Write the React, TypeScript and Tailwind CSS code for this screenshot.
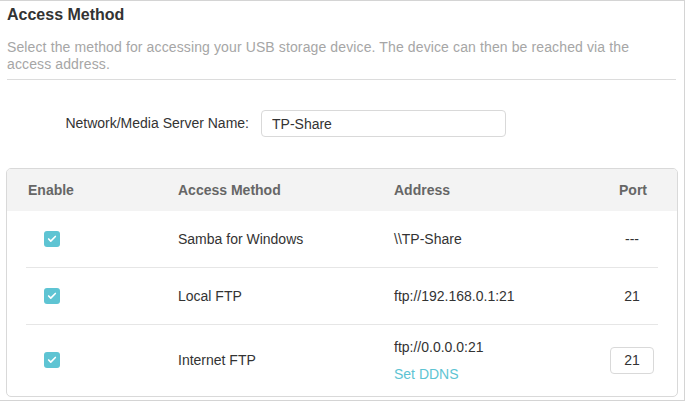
import { Check } from 'lucide-react'

const rows = [
  { method: 'Samba for Windows', address: '\\\\TP-Share', port: '---' },
  { method: 'Local FTP', address: 'ftp://192.168.0.1:21', port: '21' },
]

// teal checkbox, always checked in this view
const Checkbox = () => (
  <span className="flex h-4 w-4 items-center justify-center rounded-[3px] bg-[#5ec4d3]">
    <Check className="h-[10px] w-[10px] text-white" strokeWidth={4} />
  </span>
)

export default function App() {
  return (
    <div
      className="h-[401px] w-[685px] border-t border-r border-b border-[#d4d4d4] bg-white text-[14px] text-[#333]"
      style={{ fontFamily: '"Liberation Sans", Arial, sans-serif' }}
    >
      <div className="px-[7px]">
        <h1 className="pt-[4px] text-[16px] font-bold leading-[20px] text-[#333]">Access Method</h1>
        <p className="mt-[14px] w-[645px] pb-[6px] leading-[17px] tracking-[0.12px] text-[#a6a6a6]">
          Select the method for accessing your USB storage device. The device can then be reached via the access address.
        </p>
        <div className="mr-[1px] border-t border-[#dcdcdc]" />
      </div>

      <div className="mt-[30px] flex items-center">
        <span className="w-[250px] pr-[1px] text-right text-[#333]">Network/Media Server Name:</span>
        <input
          defaultValue="TP-Share"
          className="ml-[11px] h-[27px] w-[245px] rounded-[4px] border border-[#d9d9d9] px-[10px] text-[14px] text-[#333] outline-none"
        />
      </div>

      <div className="mx-[6px] mt-[31px] h-[229px] overflow-hidden rounded-[5px] border border-[#d9d9d9]">
        <div className="flex h-[42px] items-center bg-[#f3f3f3] font-bold text-[#666]">
          <span className="w-[171px] pl-[21px]">Enable</span>
          <span className="w-[216px]">Access Method</span>
          <span className="flex-1">Address</span>
          <span className="mr-[18px] w-[52px] text-center">Port</span>
        </div>
        <div className="px-[19px]">
          {rows.map((r) => (
            <div key={r.method} className="flex h-[57px] items-center border-b border-[#e6e6e6]">
              <span className="w-[152px] pl-[18px]">
                <Checkbox />
              </span>
              <span className="w-[216px]">{r.method}</span>
              <span className="flex-1">{r.address}</span>
              <span className="w-[52px] text-center">{r.port}</span>
            </div>
          ))}
          <div className="flex h-[70px] items-center">
            <span className="w-[152px] pl-[18px]">
              <Checkbox />
            </span>
            <span className="w-[216px]">Internet FTP</span>
            <div className="flex flex-1 flex-col gap-[6px] pt-[2px]">
              <span>ftp://0.0.0.0:21</span>
              <span className="text-[#5ec4d3]">Set DDNS</span>
            </div>
            <span className="flex w-[52px] justify-center">
              <input
                defaultValue="21"
                className="h-[27px] w-[44px] rounded-[4px] border border-[#d9d9d9] text-center text-[14px] text-[#333] outline-none"
              />
            </span>
          </div>
        </div>
      </div>
    </div>
  )
}
